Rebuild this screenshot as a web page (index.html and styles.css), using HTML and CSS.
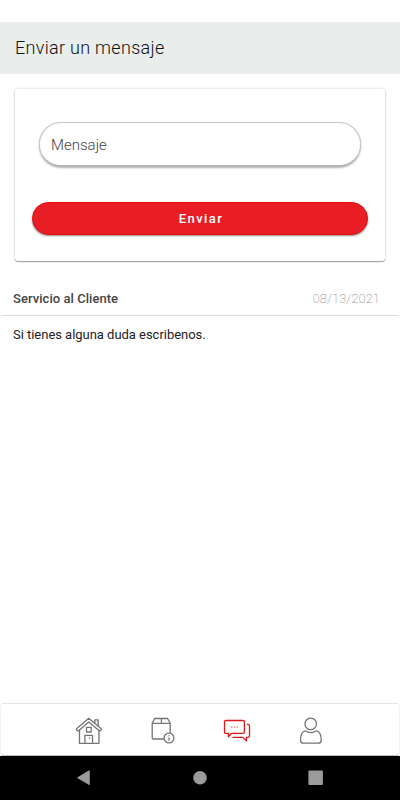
FILE: index.html
```html
<!DOCTYPE html>
<html lang="es">
<head>
    <meta charset="UTF-8">
    <meta name="viewport" content="width=device-width, initial-scale=1.0">
    <title>Enviar un mensaje</title>
    <link rel="stylesheet" href="styles.css">
</head>
<body>
    <header class="header">
        <h1>Enviar un mensaje</h1>
    </header>

    <main class="content">
        <form class="card">
            <input type="text" class="message-input" placeholder="Mensaje" aria-label="Mensaje">
            <button type="button" class="send-btn">Enviar</button>
        </form>

        <section class="message">
            <div class="message-header">
                <span class="message-author">Servicio al Cliente</span>
                <span class="message-date">08/13/2021</span>
            </div>
            <p class="message-text">Si tienes alguna duda escribenos.</p>
        </section>
    </main>

    <nav class="tab-bar">
        <svg class="tab" viewBox="0 0 30 30">
            <path d="M5.5 13.5V27.3H25V13.5"/>
            <path d="M14.7 2.3L2.6 12.8Q2.2 14.8 4.3 14.9L14.7 6L25.6 14.9Q27.6 14.8 27.2 12.8Z"/>
            <path d="M20.8 7.2V3.8H24.2V10"/>
            <rect x="12.5" y="11.4" width="4.7" height="4.6"/>
            <path d="M10.9 27.2V19.3H18.5V27.2M15.7 21.5V22.7"/>
        </svg>
        <svg class="tab" viewBox="0 0 30 30">
            <path d="M16.3 23H5.3Q4.2 23 4.2 22V7.3L6.5 2.5H19.6L22.2 7.3V17"/>
            <path d="M4.2 7.3H22.2M13.4 7.3V2.5"/>
            <circle cx="21" cy="22" r="4.9"/>
            <path d="M21 19.2V20.3M21 21.4V24.8"/>
        </svg>
        <svg class="tab active" viewBox="0 0 30 30">
            <path d="M4 4.5H20.8Q22.4 4.5 22.4 6V15.7Q22.4 17.3 20.8 17.3H9.7L6.4 20.8V17.3H4Q2.5 17.3 2.5 15.8V6Q2.5 4.5 4 4.5Z"/>
            <path d="M24.9 8.3H26Q27.5 8.3 27.5 9.8V19.8Q27.5 21.4 25.9 21.4H24.3V24.9L20.8 21.4H10.5"/>
            <path class="dots" d="M9 11H10.5M11.8 11H13.3M14.6 11H16.1"/>
        </svg>
        <svg class="tab" viewBox="0 0 30 30">
            <circle cx="14.7" cy="7.9" r="5.8"/>
            <path d="M9.3 14.8C6 15.3 4.5 18.8 4.5 24.2Q4.5 27.2 7.5 27.2H22.2Q25.2 27.2 25.2 24.2C25.2 18.8 23.7 15.3 20.4 14.8Q14.8 18.3 9.3 14.8Z"/>
        </svg>
    </nav>

    <footer class="system-bar">
        <svg viewBox="0 0 16 16"><path d="M1.6 7.3L12.8 .4Q13.8 0 13.8 1V14.2Q13.8 15.5 12.8 14.8L1.6 8.3Q1 7.8 1.6 7.3Z"/></svg>
        <svg viewBox="0 0 16 16"><circle cx="8" cy="7.7" r="6.8"/></svg>
        <svg viewBox="0 0 16 16"><rect x=".4" y=".6" width="14.5" height="14.4" rx="1"/></svg>
    </footer>
</body>
</html>
```

FILE: styles.css
```css
* {
    box-sizing: border-box;
}

body {
    font-family: Roboto, sans-serif;
    background: #fff;
    height: 100vh;
    margin: 0;
    padding-top: 22px;
    display: flex;
    flex-direction: column;
    overflow: hidden;
}

.header {
    height: 52px;
    padding: 0 15px 2px;
    background: #e9edec;
    display: flex;
    align-items: center;
}

h1 {
    margin: 0;
    font-size: 18px;
    font-weight: 350;
    letter-spacing: 0.3px;
    color: #111;
}

.content {
    flex: 1;
}

.card {
    margin: 15px 15px 0;
    height: 172px;
    padding: 33px 17px 26px;
    display: flex;
    flex-direction: column;
    justify-content: space-between;
    border-radius: 3px;
    box-shadow: 0 1px 1px rgba(0, 20, 10, 0.35), 0 0 3px rgba(0, 0, 0, 0.2);
}

.message-input {
    margin: 0 7px;
    height: 45px;
    padding: 2px 11px 0;
    border: 1px solid #c6c6c6;
    border-bottom: 2px solid #b8b8b8;
    border-radius: 22px;
    background: #fff;
    box-shadow: 0 1px 2px rgba(0, 0, 0, 0.3);
    font: 350 15px Roboto, sans-serif;
    outline: none;
}

.message-input::placeholder {
    color: #444;
    opacity: 1;
}

.send-btn {
    height: 33px;
    padding: 0 0 0 2px;
    border: 1px solid #e80c10;
    border-radius: 17px;
    background: #e91e24;
    box-shadow: 0 1px 2px rgba(0, 0, 0, 0.45);
    color: #fff;
    font: 500 13px Roboto, sans-serif;
    letter-spacing: 1.4px;
}

.message {
    margin: 23px 2px 0;
}

.message-header {
    height: 32px;
    padding: 0 18px 3px 11px;
    display: flex;
    align-items: center;
    justify-content: space-between;
    border-bottom: 1px solid #dcdcdc;
    font-size: 13px;
}

.message-author {
    font-weight: 500;
    color: #444;
    letter-spacing: 0.05px;
}

.message-date {
    font-weight: 200;
    color: #999;
}

.message-text {
    margin: 11px 11px 0;
    font-size: 13px;
    line-height: 15px;
    letter-spacing: -0.03px;
    color: #222;
}

.tab-bar {
    height: 53px;
    padding-top: 12px;
    display: flex;
    justify-content: center;
    gap: 44px;
    background: #fff;
    border: 1px solid #f3f3f3;
    border-top-color: #e4e4e4;
    border-bottom-color: #bbb;
    border-radius: 4px;
}

.tab {
    width: 30px;
    height: 30px;
    fill: none;
    stroke: #747474;
    stroke-width: 1.3;
    stroke-linejoin: round;
}

.tab.active {
    stroke: #e5161b;
}

.dots {
    stroke-width: 1.2;
    opacity: 0.7;
}

.system-bar {
    height: 44px;
    padding-top: 14px;
    display: flex;
    justify-content: center;
    gap: 100px;
    background: #000;
}

.system-bar svg {
    width: 16px;
    height: 16px;
    fill: #9b9b9b;
}
```
